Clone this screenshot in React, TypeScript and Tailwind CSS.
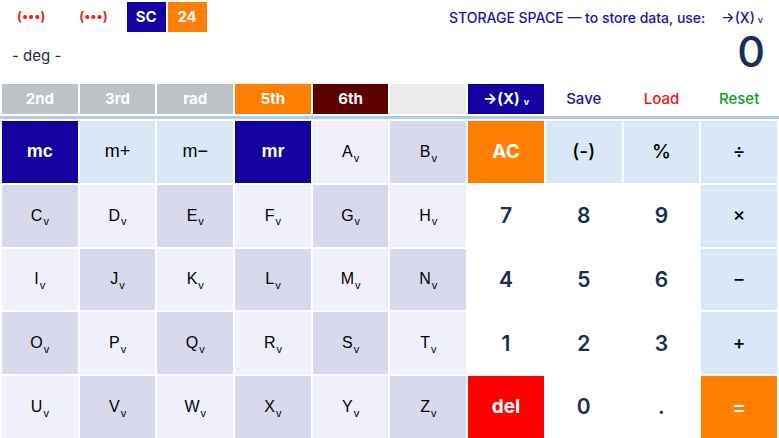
import React from 'react';

const inter = "font-['Inter',sans-serif]";
const arial = "font-['Liberation_Sans',Arial,sans-serif]";

type Key = { label: string; cls: string; sub?: boolean };

const Sub = () => <span className="text-[11px] relative top-[6px] ml-[1px]">v</span>;

const letter = (l: string, r: number, c: number): Key => ({
  label: l,
  sub: true,
  cls: `${arial} text-[16px] text-black ${(r + c) % 2 === 0 ? 'bg-[#f0f0fc]' : 'bg-[#d9d9ee]'}`,
});

const memDark = `${arial} bg-[#1500a0] text-white font-bold text-[18px]`;
const memLight = `${arial} bg-[#d9e7f6] text-black text-[18px]`;
const op = `${inter} bg-[#d9e7f6] text-black text-[19px] font-medium`;
const digit = `${inter} bg-white text-[#1a2e52] text-[21px] font-semibold`;

const App = () => {
  const letters = 'ABCDEFGHIJKLMNOPQRSTUVWXYZ'.split('');
  const rows: Key[][] = [];

  // row 1
  rows.push([
    { label: 'mc', cls: memDark },
    { label: 'm+', cls: memLight },
    { label: 'm−', cls: memLight },
    { label: 'mr', cls: memDark },
    letter('A', 0, 4),
    letter('B', 0, 5),
    { label: 'AC', cls: `${inter} bg-[#ff8000] text-white font-bold text-[19px]` },
    { label: '(-)', cls: op },
    { label: '%', cls: op },
    { label: '÷', cls: op },
  ]);

  const right = [
    ['7', '8', '9', '×'],
    ['4', '5', '6', '−'],
    ['1', '2', '3', '+'],
  ];
  for (let r = 1; r <= 4; r++) {
    const row: Key[] = [];
    for (let c = 0; c < 6; c++) {
      row.push(letter(letters[2 + (r - 1) * 6 + c], r, c));
    }
    if (r < 4) {
      const rr = right[r - 1];
      row.push({ label: rr[0], cls: digit });
      row.push({ label: rr[1], cls: digit });
      row.push({ label: rr[2], cls: digit });
      row.push({ label: rr[3], cls: op });
    } else {
      row.push({ label: 'del', cls: `${inter} bg-[#ff0000] text-white font-bold text-[19px]` });
      row.push({ label: '0', cls: digit });
      row.push({ label: '.', cls: digit });
      row.push({ label: '=', cls: `${inter} bg-[#ff8000] text-white text-[22px] font-medium` });
    }
    rows.push(row);
  }

  const bar = [
    { label: '2nd', cls: 'bg-[#bcc2c6] text-white font-bold' },
    { label: '3rd', cls: 'bg-[#bcc2c6] text-white font-bold' },
    { label: 'rad', cls: 'bg-[#bcc2c6] text-white font-bold' },
    { label: '5th', cls: 'bg-[#ff8000] text-white font-bold' },
    { label: '6th', cls: 'bg-[#5c0000] text-white font-bold' },
    { label: '', cls: 'bg-[#ebebeb]' },
    { label: '→(X)', cls: 'bg-[#1500a0] text-white font-bold', sub: true },
    { label: 'Save', cls: 'text-[#1f10a8] font-medium' },
    { label: 'Load', cls: 'text-[#ff1010] font-medium' },
    { label: 'Reset', cls: 'text-[#10a020] font-medium' },
  ];

  return (
    <div className={`w-[779px] h-[438px] bg-white overflow-hidden ${inter}`}>
      {/* header */}
      <div className="h-[84px] flex flex-col">
        <div className="flex items-start pt-[2px] pl-[17px] pr-[16px]">
          <div className="flex items-center h-[30px] gap-[34px] text-[#ee2222] text-[13px] font-bold">
            <span>(•••)</span>
            <span>(•••)</span>
          </div>
          <div className="flex gap-[2px] ml-[19px]">
            <div className="w-[39px] h-[30px] bg-[#1500a0] text-white font-bold text-[15px] flex items-center justify-center">SC</div>
            <div className="w-[39px] h-[30px] bg-[#ff8000] text-white font-bold text-[15px] flex items-center justify-center">24</div>
          </div>
          <div className="ml-auto h-[30px] flex items-center text-[#1f10a8] text-[14px] font-medium">
            STORAGE SPACE — to store data, use:
            <span className="ml-[16px]">→(X)</span>
            <span className="text-[9px] mt-[5px] ml-[3px]">v</span>
          </div>
        </div>
        <div className="flex items-center pl-[12px] pr-[14px] -mt-[2px]">
          <span className="text-[#1e2a4a] text-[15px] mt-[10px]">- deg -</span>
          <span className="ml-auto text-[#1a2e52] text-[43px] font-medium leading-none">0</span>
        </div>
      </div>

      {/* function bar */}
      <div className="grid grid-cols-10 gap-[2px] px-[2px] h-[30px]">
        {bar.map((b, i) => (
          <div key={i} className={`flex items-center justify-center text-[15px] ${b.cls}`}>
            {b.label}
            {b.sub && <span className="text-[9px] mt-[5px] ml-[4px]">v</span>}
          </div>
        ))}
      </div>
      <div className="h-[3px] bg-[#b3c9e8] mt-[2px]" />

      {/* keypad */}
      <div className="grid grid-cols-10 grid-rows-5 gap-[2px] px-[2px] pt-[2px] h-[319px]">
        {rows.flat().map((k, i) => (
          <div key={i} className={`flex items-center justify-center ${k.cls}`}>
            <span>{k.label}</span>
            {k.sub && <Sub />}
          </div>
        ))}
      </div>
    </div>
  );
};

export default App;
